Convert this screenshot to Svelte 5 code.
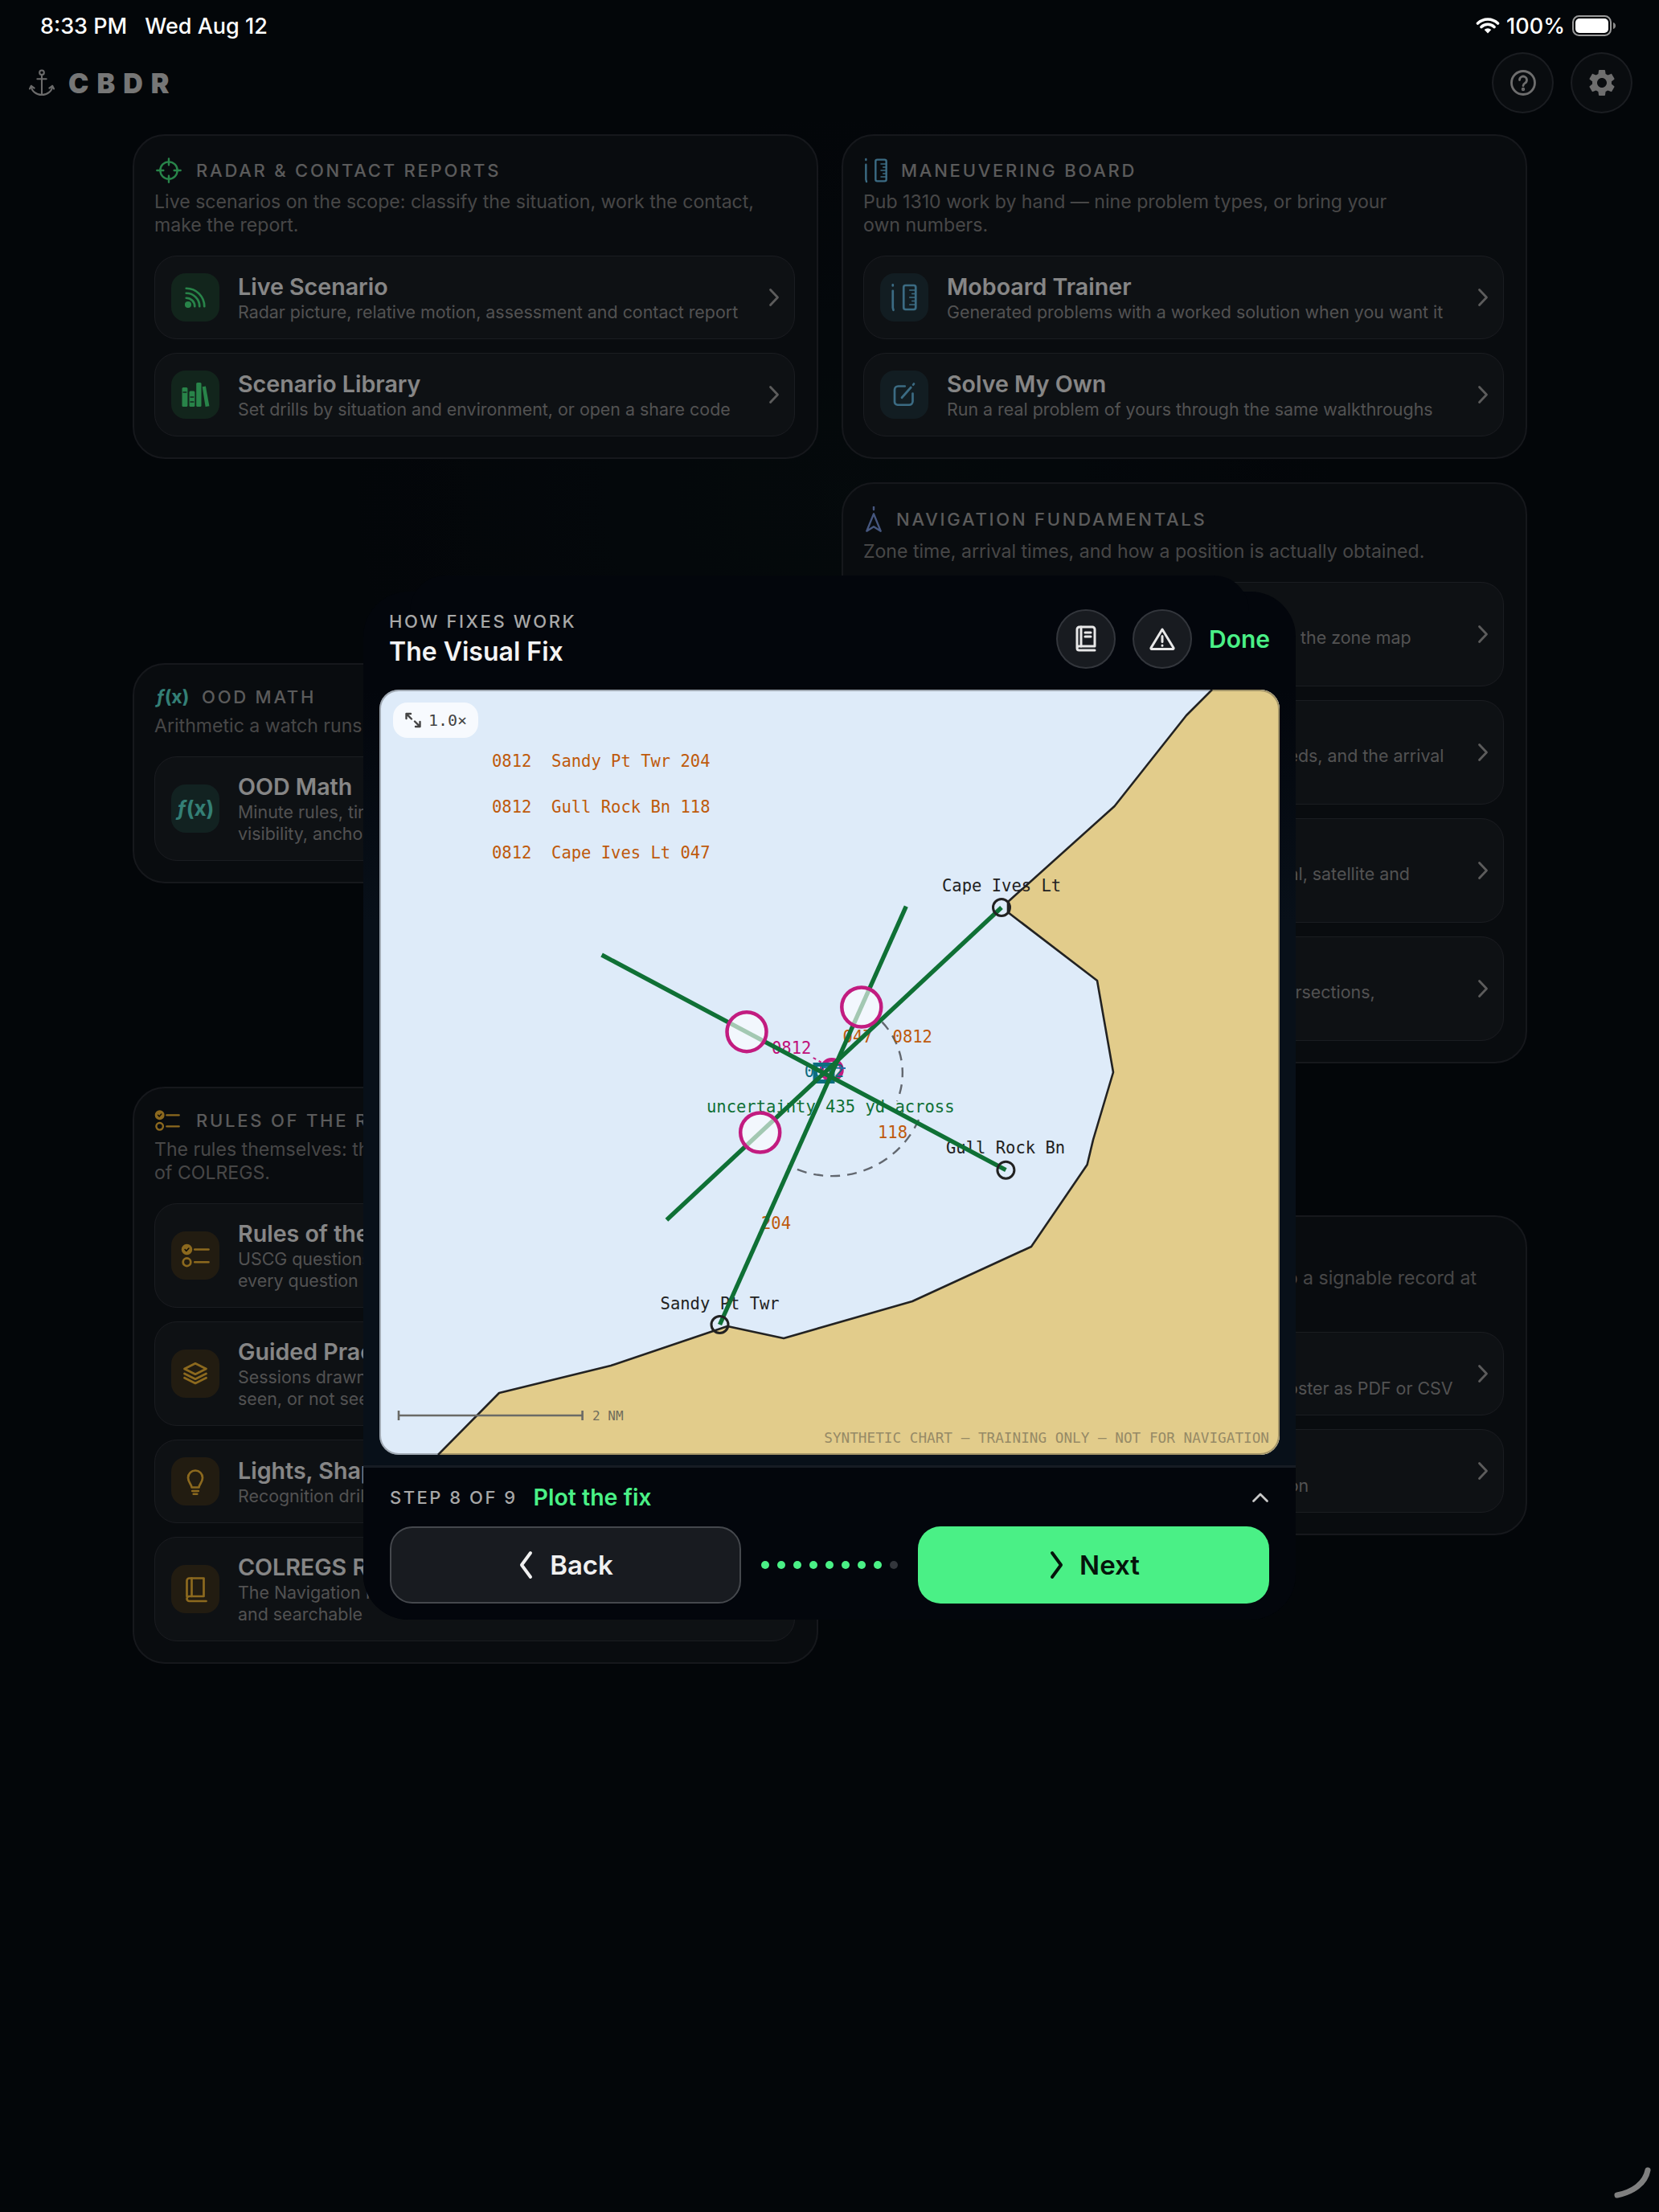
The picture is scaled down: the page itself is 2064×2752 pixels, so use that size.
<script>
  const sections = [
    {
      icon: 'crosshair', tone: 'green', title: 'Radar & Contact Reports',
      desc: 'Live scenarios on the scope: classify the situation, work the contact,\nmake the report.',
      rows: [
        { icon: 'waves', title: 'Live Scenario', sub: 'Radar picture, relative motion, assessment and contact report' },
        { icon: 'books', title: 'Scenario Library', sub: 'Set drills by situation and environment, or open a share code' }
      ]
    },
    {
      icon: 'moboard', tone: 'blue', title: 'Maneuvering Board',
      desc: 'Pub 1310 work by hand — nine problem types, or bring your\nown numbers.',
      rows: [
        { icon: 'moboard', title: 'Moboard Trainer', sub: 'Generated problems with a worked solution when you want it' },
        { icon: 'edit', title: 'Solve My Own', sub: 'Run a real problem of yours through the same walkthroughs' }
      ]
    },
    {
      icon: 'fx', tone: 'teal', small: true, title: 'OOD Math',
      desc: 'Arithmetic a watch runs on, without the calculator.',
      rows: [
        { icon: 'fx', title: 'OOD Math', sub: 'Minute rules, time, speed and distance, set and drift,\nvisibility, anchoring and fuel' }
      ]
    },
    {
      icon: 'compass', tone: 'indigo', title: 'Navigation Fundamentals',
      desc: 'Zone time, arrival times, and how a position is actually obtained.',
      rows: [
        { icon: 'compass', title: 'Zone Time', sub: 'Zone descriptions, watch conversions, and the zone map\nworked both ways' },
        { icon: 'compass', title: 'Time of Arrival', sub: 'Work out distances, the times and the speeds, and the arrival\nthey give' },
        { icon: 'compass', title: 'Position Sources', sub: 'Position from bearings and ranges: celestial, satellite and\nother' },
        { icon: 'compass', title: 'How Fixes Work', sub: 'Plots lines of position and read all their intersections,\nstep by step' }
      ]
    },
    {
      icon: 'checklist', tone: 'amber', small: true, title: 'Rules of the Road',
      desc: 'The rules themselves: the exam bank and the full text\nof COLREGS.',
      rows: [
        { icon: 'checklist', title: 'Rules of the Road', sub: 'USCG questions by topic with an explanation on\nevery question you answer' },
        { icon: 'layers', title: 'Guided Practice', sub: 'Sessions drawn from what you have missed, not yet\nseen, or not seen lately' },
        { icon: 'bulb', title: 'Lights, Shapes & Sounds', sub: 'Recognition drills for each vessel type' },
        { icon: 'book', title: 'COLREGS Reference', sub: 'The Navigation Rules, in full, kept on the device\nand searchable' }
      ]
    },
    {
      icon: 'layers', tone: 'indigo', small: true, title: 'Qualification',
      desc: 'Log every watch, sign off every session and keep a signable record at\nthe end.',
      rows: [
        { icon: 'layers', title: 'Export Record', sub: 'Track sessions by trainee and export the roster as PDF or CSV' },
        { icon: 'book', title: 'Progress', sub: 'Review your results by topic and by situation' }
      ]
    }
  ];

  const land = '1508,858 1476,890 1386.6,1003 1254,1122 1254,1135 1365,1220 1385,1334 1360,1418 1352.6,1449 1283,1551 1135,1619 975,1665 905,1650 760,1699 621,1733 545,1810 1592,1810 1592,858';
  const lops = [
    [1246, 1129, 829.4, 1517.7],
    [895.5, 1648, 1127.3, 1127.7],
    [1251.4, 1455.7, 748.6, 1188]
  ];
  const circles = [[929, 1283.7], [1071.8, 1253], [945.7, 1409]];
  const marks = [[1246, 1129], [1251.4, 1455.7], [895.5, 1648]];
  const dots = [1, 1, 1, 1, 1, 1, 1, 1, 0];
</script>

{#snippet glyph(name)}
  {#if name === 'fx'}
    <span class="fx"><i>ƒ</i>(x)</span>
  {:else}
    <svg viewBox="0 0 24 24" width="100%" height="100%" fill="none" stroke="currentColor" stroke-width="1.8" stroke-linecap="round" stroke-linejoin="round">
      {#if name === 'crosshair'}
        <circle cx="12" cy="12" r="8" /><path d="M12 1v6M12 17v6M1 12h6M17 12h6" />
      {:else if name === 'waves'}
        <circle cx="6" cy="18" r="1.8" fill="currentColor" /><path d="M4.5 12.5a7 7 0 0 1 7 7M4.5 8.5a11 11 0 0 1 11 11M4.5 4.5a15 15 0 0 1 15 15" />
      {:else if name === 'books'}
        <g fill="currentColor" stroke="none">
          <rect x="1" y="6" width="4.600" height="16" rx="1" /><rect x="7" y="9" width="4.600" height="13" rx="1" />
          <rect x="12.800" y="2" width="4.200" height="20" rx="1" /><path d="M17.800 5.500l2.800-.5 3 16.500-3.200.5z" />
        </g>
        <path d="M2 10h2.500M8 14h2.500M8 18h2.500" stroke="#224433" stroke-width="1" />
      {:else if name === 'moboard'}
        <path d="M2.500 1.500v.8M2.500 6.500v14l.5 2" /><rect x="11.500" y="2" width="10" height="20" rx="1.600" /><path d="M16.500 6h5M18.500 9h3M16.500 12h5M18.500 15h3M16.500 18h5" stroke-width="1.100" />
      {:else if name === 'edit'}
        <path d="M12.5 5H7a3 3 0 0 0-3 3v10a2.5 2.5 0 0 0 2.5 2.5H16a3 3 0 0 0 3-3V11" /><path d="M10 14.5l7.5-8.5M20 3l-.6.8" />
      {:else if name === 'compass'}
        <path d="M12 .5v2.500M12 7L5.500 23l6.500-4 6.500 4z" />
      {:else if name === 'checklist'}
        <circle cx="5" cy="7" r="3.600" fill="currentColor" /><circle cx="5" cy="17.500" r="3.200" /><path d="M11.500 7H23M11.500 17.500H23" />
        <path d="M3.400 7l1.200 1.200 2-2.200" stroke="#1c1810" stroke-width="1.100" />
      {:else if name === 'layers'}
        <path d="M12 3.500l9 4.500-9 4.500L3 8z" /><path d="M3 12l9 4.500 9-4.500M3 15.500l9 4.500 9-4.500" />
      {:else if name === 'bulb'}
        <path d="M9 17c0-2.500-3-4-3-8a6 6 0 0 1 12 0c0 4-3 5.500-3 8zM9.500 20h5M10.500 22.500h3" />
      {:else if name === 'book'}
        <path d="M5 18V5a2 2 0 0 1 2-2h12v15H7a2 2 0 0 0-2 2 2 2 0 0 0 2 2h14" /><path d="M9 3v15" />
      {/if}
    </svg>
  {/if}
{/snippet}

<div class="status">
  <div class="status-left"><span class="time">8:33 PM</span><span>Wed Aug 12</span></div>
  <div class="status-right">
    <svg class="wifi" width="30" height="22" viewBox="0 0 30 22" fill="none" stroke="#fff" stroke-width="3.600" stroke-linecap="round">
      <path d="M2.500 8a18 18 0 0 1 25 0M7 12.500a11.500 11.500 0 0 1 16 0" /><path d="M15 20.500l-4.300-4.500a6 6 0 0 1 8.600 0z" fill="#fff" stroke="none" />
    </svg>
    <span>100%</span>
    <svg width="54" height="26" viewBox="0 0 54 26">
      <rect x="1" y="1" width="47" height="24" rx="7.500" fill="none" stroke="#9a9a9a" stroke-width="2" />
      <rect x="4" y="4" width="41" height="18" rx="5" fill="#fff" />
      <path d="M51 9c2 .5 3 2 3 4s-1 3.500-3 4z" fill="#8a8a8a" />
    </svg>
  </div>
</div>

<main class="page">
  <header class="topbar">
    <div class="brand">
      <svg class="anchor" width="32" height="36" viewBox="0 0 34 38" fill="none" stroke="currentColor" stroke-width="2.200" stroke-linecap="round" stroke-linejoin="round">
        <circle cx="17" cy="5.500" r="3" /><path d="M17 8.500V35M11 14h12M3 23c0 7 7 12 14 12s14-5 14-12M3 23l-2 4M3 23l4 3M31 23l2 4M31 23l-4 3" />
      </svg>
      <span class="wordmark">CBDR</span>
    </div>
    <div class="top-actions">
      <button class="round" aria-label="Help">
        <svg width="34" height="34" viewBox="0 0 34 34" fill="none" stroke="currentColor" stroke-width="2.800" stroke-linecap="round">
          <circle cx="17" cy="17" r="14.500" /><path d="M12.500 13.500a4.500 4.500 0 1 1 6.800 3.900c-1.500.9-2.300 1.700-2.300 3.300" /><circle cx="17" cy="25" r=".8" fill="currentColor" />
        </svg>
      </button>
      <button class="round" aria-label="Settings">
        <svg width="40" height="40" viewBox="0 0 24 24" fill="currentColor"><path d="M19.140 12.940c.04-.3.06-.61.06-.94 0-.32-.02-.64-.07-.94l2.030-1.580c.18-.14.23-.41.12-.61l-1.920-3.320c-.12-.22-.37-.29-.59-.22l-2.390.96c-.5-.38-1.030-.7-1.620-.94l-.36-2.540c-.04-.24-.24-.41-.48-.41h-3.840c-.24 0-.43.17-.47.41l-.36 2.540c-.59.24-1.130.57-1.620.94l-2.390-.96c-.22-.08-.47 0-.59.22L2.740 8.870c-.12.21-.08.47.12.61l2.030 1.580c-.05.3-.09.63-.09.94s.02.64.07.94l-2.030 1.580c-.18.14-.23.41-.12.61l1.920 3.320c.12.22.37.29.59.22l2.390-.96c.5.38 1.030.7 1.620.94l.36 2.540c.05.24.24.41.48.41h3.840c.24 0 .44-.17.47-.41l.36-2.540c.59-.24 1.130-.56 1.620-.94l2.390.96c.22.08.47 0 .59-.22l1.920-3.320c.12-.22.07-.47-.12-.61l-2.010-1.580zM12 15.600c-1.980 0-3.600-1.620-3.600-3.600s1.620-3.600 3.600-3.600 3.600 1.620 3.600 3.600-1.620 3.600-3.600 3.600z" /></svg>
      </button>
    </div>
  </header>

  <div class="grid">
    {#each sections as s}
      <section class="card {s.tone}">
        <div class="card-head {s.icon}" class:small={s.small}>
          <span class="head-icon">{@render glyph(s.icon)}</span>
          <h2>{s.title}</h2>
        </div>
        <p class="desc">{s.desc}</p>
        <div class="rows">
          {#each s.rows as r}
            <div class="row">
              <span class="row-icon">{@render glyph(r.icon)}</span>
              <div class="row-text">
                <span class="row-title">{r.title}</span>
                <span class="row-sub">{r.sub}</span>
              </div>
              <svg class="chev" width="14" height="24" viewBox="0 0 14 24" fill="none" stroke="currentColor" stroke-width="2.800" stroke-linecap="round" stroke-linejoin="round"><path d="M2.500 2.500l9 9.500-9 9.500" /></svg>
            </div>
          {/each}
        </div>
      </section>
    {/each}
  </div>
</main>

<div class="scrim"></div>

<div class="modal">
  <div class="modal-head">
    <div>
      <div class="eyebrow">HOW FIXES WORK</div>
      <div class="modal-title">The Visual Fix</div>
    </div>
    <div class="modal-actions">
      <button class="tool" aria-label="Reference">
        <svg width="32" height="36" viewBox="0 0 32 36" fill="none" stroke="#e8e8e8" stroke-width="3" stroke-linejoin="round" stroke-linecap="round">
          <path d="M5 29V6a3 3 0 0 1 3-3h16a3 3 0 0 1 3 3v21H7.500A2.500 2.500 0 0 0 5 29.500 2.500 2.500 0 0 0 7.500 32H27" /><path d="M10 3v24M15 10h7M15 15h7" />
        </svg>
      </button>
      <button class="tool" aria-label="Warning">
        <svg width="34" height="32" viewBox="0 0 34 32" fill="none" stroke="#e8e8e8" stroke-width="3" stroke-linejoin="round" stroke-linecap="round">
          <path d="M17 4L3 27a1 1 0 0 0 1 1.500h26a1 1 0 0 0 1-1.500z" /><path d="M17 12.500v7M17 24v.2" />
        </svg>
      </button>
      <span class="done">Done</span>
    </div>
  </div>

  <div class="modal-body">
    <div class="chart">
      <svg viewBox="472 858 1120 952" width="1120" height="952" class="chart-svg">
        <rect x="472" y="858" width="1120" height="952" fill="#deebf9" />
        <polygon points={land} fill="#e2cc8b" />
        <polyline points={land.split(' ').slice(0, 16).join(' ')} fill="none" stroke="#222" stroke-width="2.600" stroke-linejoin="round" />

        <g class="log">
          <text x="612" y="954">0812  Sandy Pt Twr 204</text>
          <text x="612" y="1011">0812  Gull Rock Bn 118</text>
          <text x="612" y="1068">0812  Cape Ives Lt 047</text>
        </g>

        <g class="place">
          <text x="1172" y="1109">Cape Ives Lt</text>
          <text x="1177" y="1435">Gull Rock Bn</text>
          <text x="821.600" y="1629">Sandy Pt Twr</text>
        </g>

        <g fill="none" stroke="#62676f" stroke-width="2.400" stroke-dasharray="12 9">
          <path d="M1097.500 1271.700A92 92 0 0 1 1116 1370" />
          <path d="M1143 1393A118 118 0 0 1 981 1450" />
        </g>

        <g class="log">
          <text x="1048.600" y="1297">047</text>
          <text x="1110.600" y="1297">0812</text>
          <text x="1092" y="1416">118</text>
          <text x="947" y="1529">204</text>
        </g>
        <text class="pink" x="960" y="1311">0812</text>
        <text class="uncert" x="879" y="1384">uncertainty 435 yd across</text>

        <path d="M1011.700 1316L1021.700 1321.700" stroke="#c21c80" stroke-width="2" stroke-dasharray="4 4" />
        <circle cx="1034.800" cy="1331" r="12.500" fill="none" stroke="#c21c80" stroke-width="5" />
        <rect x="1014" y="1324.500" width="22" height="21" fill="none" stroke="#0d6f80" stroke-width="5" />
        <text class="teal-text" x="1000.800" y="1340">0812</text>
        <path d="M1024 1328l28 1" stroke="#1c6fa8" stroke-width="2" />

        <g stroke="#0f7035" stroke-width="5.400" stroke-linecap="butt">
          {#each lops as [x1, y1, x2, y2]}
            <line {x1} {y1} {x2} {y2} />
          {/each}
        </g>

        {#each circles as [cx, cy]}
          <circle {cx} {cy} r="24.500" fill="#fff" fill-opacity=".62" stroke="#c21c80" stroke-width="4.500" />
        {/each}

        {#each marks as [cx, cy]}
          <circle {cx} {cy} r="10.500" fill="none" stroke="#222" stroke-width="3" />
        {/each}

        <g stroke="#6a6a66" stroke-width="2.600">
          <path d="M496 1761H724.600M496 1755v12M724.600 1755v12" />
        </g>
        <text class="scale" x="737" y="1767">2 NM</text>
        <text class="disclaimer" x="1579" y="1794.500" text-anchor="end">SYNTHETIC CHART — TRAINING ONLY — NOT FOR NAVIGATION</text>
      </svg>
      <div class="zoom-chip">
        <svg width="22" height="22" viewBox="0 0 22 22" fill="none" stroke="#444" stroke-width="2.400" stroke-linecap="round" stroke-linejoin="round">
          <path d="M2.500 9V3H8M3 3.500L9 9.500M19.500 13v6H14M19 18.500L13 12.500" />
        </svg>
        <span>1.0×</span>
      </div>
    </div>
  </div>

  <div class="modal-foot">
    <div class="step-row">
      <span class="step-no">STEP 8 OF 9</span>
      <span class="step-name">Plot the fix</span>
      <svg class="up" width="22" height="14" viewBox="0 0 22 14" fill="none" stroke="#c8c8c8" stroke-width="2.800" stroke-linecap="round" stroke-linejoin="round"><path d="M2.500 11.500L11 3l8.500 8.500" /></svg>
    </div>
    <div class="nav-row">
      <button class="nav back">
        <svg width="22" height="36" viewBox="0 0 22 36" fill="none" stroke="currentColor" stroke-width="4" stroke-linecap="round" stroke-linejoin="round"><path d="M16 3L5 18l11 15" /></svg>
        Back
      </button>
      <div class="dots">
        {#each dots as on}
          <i class:on></i>
        {/each}
      </div>
      <button class="nav next">
        <svg width="22" height="36" viewBox="0 0 22 36" fill="none" stroke="currentColor" stroke-width="4" stroke-linecap="round" stroke-linejoin="round"><path d="M6 3l11 15L6 33" /></svg>
        Next
      </button>
    </div>
  </div>
</div>

<svg class="home" width="52" height="50" viewBox="0 0 52 50" fill="none" stroke="#808080" stroke-width="7" stroke-linecap="round"><path d="M42 8C39 24 24 35 4 39" /></svg>

<style>
  :global(body) {
    margin: 0;
    background: #04070c;
    font-family: Inter, "Noto Sans", sans-serif;
  }

  button {
    font-family: inherit;
    padding: 0;
    cursor: pointer;
  }

  .page {
    position: relative;
    box-sizing: border-box;
    height: 2752px;
    padding: 65px 33px 0 33px;
    background:
      radial-gradient(900px 700px at 1050px 620px, rgba(60, 160, 90, 0.05), transparent 70%),
      #070b12;
    color: #f0f0f0;
  }

  /* status bar sits above the scrim */
  .status {
    position: absolute;
    z-index: 30;
    top: 0;
    left: 0;
    width: 2064px;
    height: 64px;
    box-sizing: border-box;
    padding: 0 54px 0 50px;
    display: flex;
    align-items: center;
    justify-content: space-between;
    color: #fff;
    font-size: 27px;
    font-weight: 500;
  }
  .status-left {
    display: flex;
    gap: 22px;
  }
  .status-right {
    display: flex;
    align-items: center;
    gap: 9px;
  }
  .wifi {
    margin-right: -1px;
  }

  .topbar {
    display: flex;
    align-items: center;
    justify-content: space-between;
    height: 76px;
    margin-bottom: 26px;
  }
  .brand {
    display: flex;
    align-items: center;
    gap: 17px;
    margin-left: 3px;
    color: #c4c4c4;
  }
  .wordmark {
    font-size: 34px;
    font-weight: 900;
    letter-spacing: 10px;
    color: #d8d8d8;
  }
  .top-actions {
    display: flex;
    gap: 21px;
  }
  .round {
    width: 77px;
    height: 76px;
    border-radius: 50%;
    border: 2px solid #31353c;
    background: #12161d;
    color: #c8c8c8;
    display: flex;
    align-items: center;
    justify-content: center;
  }

  .grid {
    display: grid;
    grid-template-columns: 853px 853px;
    column-gap: 29px;
    row-gap: 29px;
    align-items: center;
    margin-left: 132px;
  }

  .card {
    box-sizing: border-box;
    padding: 24px 27px 26px 25px;
    border: 2px solid #282c33;
    border-radius: 40px;
    background: #12161d;
  }
  .green { --tone: #4af086; --tone-bg: #224433; }
  .blue { --tone: #6cc4ee; --tone-bg: #22363f; }
  .teal { --tone: #5fe8d8; --tone-bg: #223f3d; }
  .indigo { --tone: #809fe8; --tone-bg: #262f48; }
  .amber { --tone: #ffc038; --tone-bg: #3f3420; }

  .card-head {
    display: flex;
    align-items: center;
    gap: 20px;
    height: 38px;
    margin-bottom: 6px;
  }
  .card-head.small {
    height: 32px;
  }
  .card-head.compass {
    height: 40px;
  }
  .head-icon {
    width: 32px;
    height: 32px;
    flex: none;
    color: var(--tone);
    display: flex;
    align-items: center;
  }
  .crosshair .head-icon {
    margin-left: 2px;
    margin-right: -2px;
  }
  .moboard .head-icon {
    margin-right: -5px;
  }
  .compass .head-icon {
    margin-left: -3px;
    margin-right: -8px;
  }
  .card-head.fx .head-icon {
    width: 38px;
    margin-left: 2px;
    margin-right: -1px;
  }
  h2 {
    margin: 0;
    font-size: 22px;
    font-weight: 500;
    letter-spacing: 2.770px;
    text-transform: uppercase;
    color: #a6a6a6;
  }
  .desc {
    margin: 0 0 23px;
    font-size: 23.100px;
    line-height: 29px;
    white-space: pre-line;
    color: #828282;
  }

  .rows {
    display: flex;
    flex-direction: column;
    gap: 17px;
  }
  .row {
    box-sizing: border-box;
    min-height: 104px;
    padding: 19px 18px 19px 20px;
    display: flex;
    align-items: center;
    gap: 23px;
    border: 1px solid #31353c;
    border-radius: 28px;
    background: #1b1f25;
  }
  .row-icon {
    box-sizing: border-box;
    width: 60px;
    height: 60px;
    padding: 12px;
    flex: none;
    border-radius: 18px;
    background: var(--tone-bg);
    color: var(--tone);
    display: flex;
    align-items: center;
    justify-content: center;
  }
  .row-text {
    flex: 1;
    display: flex;
    flex-direction: column;
  }
  .row-title {
    font-size: 28.600px;
    line-height: 36px;
    font-weight: 600;
    color: #f4f4f4;
  }
  .row-sub {
    font-size: 21.400px;
    line-height: 27px;
    white-space: pre-line;
    color: #959595;
  }
  .chev {
    flex: none;
    color: #a8a8a8;
  }
  .fx {
    font-size: 23px;
    font-weight: 700;
    white-space: nowrap;
  }
  .fx i {
    font-style: italic;
  }
  .row-icon .fx {
    font-size: 26px;
  }

  .scrim {
    position: absolute;
    z-index: 10;
    inset: 0;
    height: 2752px;
    background: rgba(0, 0, 0, 0.45);
  }

  .modal {
    position: absolute;
    z-index: 20;
    top: 736px;
    left: 452px;
    width: 1160px;
    height: 1279px;
    display: flex;
    flex-direction: column;
    border-radius: 56px;
    background: #03060c;
  }
  .modal::before {
    content: '';
    position: absolute;
    z-index: -1;
    top: -20px;
    left: 58px;
    right: 58px;
    height: 100px;
    border-radius: 44px 44px 0 0;
    background: #03060c;
  }
  .modal-head {
    height: 122px;
    box-sizing: border-box;
    padding: 20px 32px 0;
    display: flex;
    align-items: flex-start;
    justify-content: space-between;
  }
  .eyebrow {
    margin-top: 4px;
    font-size: 22px;
    font-weight: 500;
    letter-spacing: 2.600px;
    color: #a8a8a8;
  }
  .modal-title {
    margin-top: 5px;
    font-size: 32px;
    font-weight: 600;
    color: #f4f4f4;
  }
  .modal-actions {
    display: flex;
    align-items: center;
    gap: 21px;
    margin-top: 2px;
  }
  .tool {
    width: 74px;
    height: 74px;
    border-radius: 50%;
    border: 2px solid #33363c;
    background: #181b20;
    display: flex;
    align-items: center;
    justify-content: center;
  }
  .done {
    font-size: 30px;
    font-weight: 600;
    color: #4af086;
  }

  .modal-body {
    padding: 0 20px 13px;
    background: linear-gradient(#03060c, #081019 30%, #081019);
  }
  .chart {
    position: relative;
    width: 1120px;
    height: 952px;
    border-radius: 24px;
    overflow: hidden;
  }
  .chart::after {
    content: '';
    position: absolute;
    inset: 0;
    border-radius: 24px;
    box-shadow: inset 0 0 0 2px rgba(30, 30, 30, 0.32);
    pointer-events: none;
  }
  .chart-svg {
    display: block;
  }
  .chart-svg text {
    font-family: "DejaVu Sans Mono", "Liberation Mono", monospace;
    font-size: 20.500px;
    white-space: pre;
  }
  .chart-svg .log text {
    fill: #bf5a0c;
  }
  .chart-svg .place text {
    fill: #222;
  }
  .chart-svg .pink {
    fill: #c0107a;
  }
  .chart-svg .uncert {
    fill: #0f7035;
  }
  .chart-svg .teal-text {
    fill: #0b6b80;
  }
  .chart-svg .scale {
    font-size: 16px;
    fill: #6f6c5c;
  }
  .chart-svg .disclaimer {
    font-size: 17.700px;
    fill: #968a66;
  }
  .zoom-chip {
    position: absolute;
    top: 16px;
    left: 17px;
    width: 106px;
    height: 44px;
    display: flex;
    align-items: center;
    justify-content: center;
    gap: 8px;
    border-radius: 18px;
    background: rgba(255, 255, 255, 0.75);
    color: #444;
    font-family: "DejaVu Sans Mono", monospace;
    font-size: 20px;
  }

  .modal-foot {
    flex: 1;
    padding: 0 33px 20px;
    border-top: 3px solid #171c24;
    border-radius: 0 0 56px 56px;
    background: #03060c;
    display: flex;
    flex-direction: column;
  }
  .step-row {
    height: 73px;
    display: flex;
    align-items: center;
    gap: 20px;
  }
  .step-no {
    font-size: 22px;
    font-weight: 500;
    letter-spacing: 2.500px;
    color: #a8a8a8;
  }
  .step-name {
    flex: 1;
    font-size: 28.500px;
    font-weight: 600;
    color: #4af086;
  }
  .nav-row {
    display: flex;
    align-items: center;
    justify-content: space-between;
  }
  .nav {
    box-sizing: border-box;
    width: 437px;
    height: 96px;
    display: flex;
    align-items: center;
    justify-content: center;
    gap: 18px;
    border-radius: 28px;
    font-size: 33px;
    font-weight: 600;
  }
  .back {
    border: 2px solid #45484d;
    background: #181b20;
    color: #f0f0f0;
  }
  .next {
    border: none;
    background: #4af086;
    color: #05140b;
  }
  .dots {
    display: flex;
    gap: 10px;
  }
  .dots i {
    display: block;
    width: 10px;
    height: 10px;
    border-radius: 50%;
    background: #33363c;
  }
  .dots i.on {
    background: #4af086;
  }

  .home {
    position: absolute;
    z-index: 30;
    top: 2692px;
    left: 2008px;
  }
</style>
